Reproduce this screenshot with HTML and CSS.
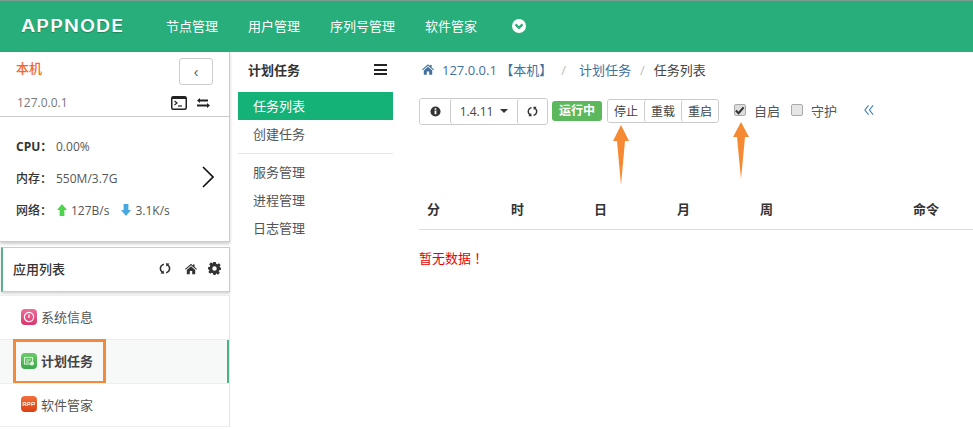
FILE: index.html
```html
<!DOCTYPE html>
<html lang="zh-CN">
<head>
    <meta charset="UTF-8">
    <title>AppNode</title>
    <link rel="stylesheet" href="styles.css">
</head>
<body>
    <svg class="sprites" width="0" height="0">
        <symbol id="i-home" viewBox="0 0 16 14"><path d="M8 0 L10.6 2.3 V1 H12.8 V4.2 L16 7 L15 8.1 L8 2.1 L1 8.1 L0 7 Z M8 3.4 L13.6 8.2 V14 H9.6 V9.8 H6.4 V14 H2.4 V8.2 Z"/></symbol>
        <symbol id="i-refresh" viewBox="0 0 14 14"><path d="M5.6 1.2 L5.9 3 C3.9 3.5 2.6 5 2.6 7 C2.6 8.3 3.2 9.4 4.1 10.2 L5.2 8.9 L6 13 L1.8 12.9 L2.9 11.5 C1.5 10.4 .7 8.8 .7 7 C.7 4.1 2.8 1.8 5.6 1.2 Z M8.4 12.8 L8.1 11 C10.1 10.5 11.4 9 11.4 7 C11.4 5.7 10.8 4.6 9.9 3.8 L8.8 5.1 L8 1 L12.2 1.1 L11.1 2.5 C12.5 3.6 13.3 5.2 13.3 7 C13.3 9.9 11.2 12.2 8.4 12.8 Z"/></symbol>
        <symbol id="i-gear" viewBox="0 0 14 14"><path fill-rule="evenodd" d="M5.6 0 H8.4 L8.8 1.9 L10 2.4 L11.7 1.3 L13.6 3.2 L12.5 4.9 L13 6 L14 6.2 V8.4 L12.1 8.8 L11.6 10 L12.7 11.7 L10.8 13.6 L9.1 12.5 L8.4 12.9 L8.1 14 H5.9 L5.2 12.1 L4 11.6 L2.3 12.7 L.4 10.8 L1.5 9.1 L1 8 L0 7.8 V5.6 L1.9 5.2 L2.4 4 L1.3 2.3 L3.2 .4 L4.9 1.5 L5.2 1.3 Z M7 4.6 A2.4 2.4 0 1 0 7 9.4 A2.4 2.4 0 1 0 7 4.6 Z"/></symbol>
    </svg>

    <header class="topbar">
        <div class="logo">APPNODE</div>
        <nav class="topnav">
            <a>节点管理</a>
            <a>用户管理</a>
            <a>序列号管理</a>
            <a>软件管家</a>
            <svg class="more" viewBox="0 0 16 16" width="14" height="14"><circle cx="8" cy="8" r="8" fill="#fff"/><path d="M4 6.2 L8 10.2 L12 6.2" fill="none" stroke="#27ae7a" stroke-width="2.6"/></svg>
        </nav>
    </header>

    <div class="layout">
        <aside class="sidebar">
            <section class="node-card">
                <div class="node-head">
                    <div class="node-name">本机</div>
                    <button class="collapse">‹</button>
                </div>
                <div class="node-ip">
                    <span>127.0.0.1</span>
                    <svg class="term" viewBox="0 0 16 14" width="16" height="14"><rect x=".75" y=".75" width="14.5" height="12.5" rx="1.5" fill="#fff" stroke="#222" stroke-width="1.5"/><rect x="1" y="1" width="14" height="2" fill="#222"/><path d="M3.5 5 L6 7 L3.5 9" fill="none" stroke="#222" stroke-width="1.2"/><path d="M7 10 H11" stroke="#222" stroke-width="1.2"/></svg>
                    <svg class="swap" viewBox="0 0 13 10" width="13" height="10"><path d="M3 0 V1.5 H11 V3.5 H3 V5 L0 2.5 Z M0 6.5 H10 V5 L13 7.5 L10 10 V8.5 H0 Z" fill="#222"/></svg>
                </div>
                <div class="node-stats">
                    <div class="stat"><b class="cpu">CPU：</b><span>0.00%</span></div>
                    <div class="stat"><b>内存：</b><span>550M/3.7G</span></div>
                    <div class="stat">
                        <b>网络：</b>
                        <svg class="net" viewBox="0 0 10 12" width="10" height="12"><path d="M5 0 L10 6 H7.4 V12 H2.6 V6 H0 Z" fill="#4fd34f"/></svg>
                        <span class="rate">127B/s</span>
                        <svg class="net" viewBox="0 0 10 12" width="10" height="12"><path d="M5 12 L10 6 H7.4 V0 H2.6 V6 H0 Z" fill="#4aa8e0"/></svg>
                        <span>3.1K/s</span>
                    </div>
                    <svg class="stat-next" viewBox="0 0 12 22" width="12" height="22"><path d="M1 1 L11 11 L1 21" fill="none" stroke="#111" stroke-width="1.6"/></svg>
                </div>
            </section>

            <section class="apps-head">
                <span class="apps-title">应用列表</span>
                <svg class="tool" width="12" height="13"><use href="#i-refresh"/></svg>
                <svg class="tool tool-home" width="12" height="12"><use href="#i-home"/></svg>
                <svg class="tool tool-gear" width="13" height="13"><use href="#i-gear"/></svg>
            </section>

            <ul class="apps">
                <li class="app">
                    <span class="app-icon pink"><svg viewBox="0 0 16 16" width="16" height="16"><circle cx="8" cy="8" r="4.6" fill="none" stroke="#fff" stroke-width="1.2"/><path d="M8 5.5 V9" stroke="#fff" stroke-width="1.3"/></svg></span>
                    <span>系统信息</span>
                </li>
                <li class="app active">
                    <span class="app-icon green"><svg viewBox="0 0 16 16" width="16" height="16"><rect x="3.5" y="4.5" width="8" height="6.5" fill="none" stroke="#d6f0d0" stroke-width="1.1"/><path d="M5 7 H10 M5 9 H8" stroke="#d6f0d0"/><circle cx="11" cy="10.5" r="2" fill="#e4f5df"/></svg></span>
                    <span>计划任务</span>
                    <span class="highlight"></span>
                </li>
                <li class="app">
                    <span class="app-icon orange"><svg viewBox="0 0 16 16" width="16" height="16"><path d="M2 10 V6.5 H4.8 V10 M2 8.6 H4.8 M6.4 10 V6.5 H9 V8.5 H6.4 M10.6 10 V6.5 H13.4 V8.5 H10.6" fill="none" stroke="#ffe2d0"/></svg></span>
                    <span>软件管家</span>
                </li>
            </ul>
        </aside>

        <nav class="submenu">
            <div class="sub-head">
                <span>计划任务</span>
                <span class="bars"><i></i><i></i><i></i></span>
            </div>
            <a class="sub-item current">任务列表</a>
            <a class="sub-item">创建任务</a>
            <div class="sub-rule"></div>
            <a class="sub-item">服务管理</a>
            <a class="sub-item">进程管理</a>
            <a class="sub-item">日志管理</a>
        </nav>

        <main class="content">
            <div class="crumbs">
                <svg class="crumb-home" width="12" height="11"><use href="#i-home"/></svg>
                <a>127.0.0.1 【本机】</a>
                <span class="sep wide">/</span>
                <a>计划任务</a>
                <span class="sep">/</span>
                <span>任务列表</span>
            </div>

            <div class="toolbar">
                <div class="btn-group tall">
                    <button class="btn"><svg viewBox="0 0 12 12" width="11" height="11"><circle cx="6" cy="6" r="5.5" fill="#333"/><rect x="5" y="5" width="2" height="4" fill="#fff"/><rect x="5" y="2.5" width="2" height="1.6" fill="#fff"/></svg></button>
                    <button class="btn version">1.4.11 <i class="caret"></i></button>
                    <button class="btn"><svg width="11" height="11" class="dark"><use href="#i-refresh"/></svg></button>
                </div>
                <span class="status">运行中</span>
                <div class="btn-group">
                    <button class="btn">停止</button>
                    <button class="btn">重载</button>
                    <button class="btn">重启</button>
                </div>
                <label class="check first"><span class="box on"><svg viewBox="0 0 12 12" width="11" height="11"><path d="M2 6 L5 9 L10.5 2.5" fill="none" stroke="#333" stroke-width="2.2"/></svg></span>自启</label>
                <label class="check"><span class="box"></span>守护</label>
                <svg class="fold" viewBox="0 0 11 11" width="10" height="10"><path d="M5 .5 L1 5.5 L5 10.5 M10 .5 L6 5.5 L10 10.5" fill="none" stroke="#3f7fb5" stroke-width="1.2"/></svg>
            </div>

            <table class="tasks">
                <thead>
                    <tr><th class="c-min">分</th><th class="c-col">时</th><th class="c-col">日</th><th class="c-col">月</th><th class="c-week">周</th><th>命令</th></tr>
                </thead>
            </table>
            <p class="empty" lang="zh-Hant">暂无数据！</p>

            <svg class="arrow arrow-stop" viewBox="0 0 16 60" width="16" height="60"><path d="M8 0 L16 16 H12 L8 60 L4 16 H0 Z" fill="#f58a33"/></svg>
            <svg class="arrow arrow-auto" viewBox="0 0 16 57" width="16" height="57"><path d="M8 0 L16 15 H12 L8 57 L4 15 H0 Z" fill="#f58a33"/></svg>
        </main>
    </div>
</body>
</html>
```

FILE: styles.css
```css
* {
    box-sizing: border-box;
}
body {
    margin: 0;
    height: 429px;
    overflow: hidden;
    background: #fff;
    color: #333;
    font-family: "Open Sans", "Noto Sans CJK SC", sans-serif;
    font-size: 13px;
}
.sprites {
    position: absolute;
}
.topbar {
    height: 52px;
    display: flex;
    align-items: center;
    padding-bottom: 2px;
    background: #27ae7a;
    border-top: 1px solid #7f9c90;
    color: #fff;
}
.logo {
    width: 166px;
    padding-left: 21px;
    font-family: Inter, sans-serif;
    font-size: 17px;
    font-weight: 600;
    letter-spacing: 1px;
    transform: scaleX(1.15);
    transform-origin: 21px 50%;
    text-shadow: 0 1px 1px rgba(0, 0, 0, .25);
}
.topnav {
    display: flex;
    align-items: center;
    gap: 30px;
    font-size: 13px;
}
.more {
    margin-left: 5px;
}
.layout {
    display: flex;
    height: 377px;
}
.sidebar {
    width: 230px;
    flex: none;
    background: #fff;
}
.node-card {
    border-right: 1px solid #ccc;
    border-bottom: 1px solid #ccc;
    box-shadow: 0 2px 3px rgba(0, 0, 0, .2);
}
.node-head {
    height: 37px;
    display: flex;
    justify-content: space-between;
    padding: 6px 16px 0;
}
.node-name {
    color: #f2691f;
    font-size: 13px;
    font-weight: 500;
}
.collapse {
    width: 34px;
    height: 27px;
    padding: 0;
    background: #fff;
    border: 1px solid #ccc;
    border-radius: 3px;
    color: #555;
    font-size: 14px;
}
.node-ip {
    height: 28px;
    display: flex;
    align-items: center;
    padding: 0 19px 0 17px;
    border-bottom: 1px solid #ccc;
    color: #777;
    font-size: 12px;
}
.node-ip span {
    flex: 1;
}
.swap {
    margin-left: 10px;
}
.node-stats {
    position: relative;
    padding: 13px 16px 15px;
}
.stat {
    height: 32px;
    display: flex;
    align-items: center;
    font-size: 12px;
    color: #555;
}
.stat b {
    width: 40px;
    color: #333;
    font-weight: 500;
}
.stat b.cpu {
    font-weight: 700;
}
.net {
    margin-right: 4px;
    margin-left: 1px;
}
.rate {
    margin-right: 11px;
}
.stat-next {
    position: absolute;
    right: 15px;
    top: 49px;
}
.apps-head {
    height: 45px;
    margin: 5px 0 0 1px;
    display: flex;
    align-items: center;
    padding: 0 8px 2px 10px;
    border: 1px solid #ccc;
    border-left: 2px solid #5cb08c;
    box-shadow: 0 2px 2px rgba(0, 0, 0, .15);
}
.apps-title {
    flex: 1;
    font-size: 13px;
    font-weight: 500;
}
.tool {
    fill: #333;
}
.tool-home {
    margin-left: 14px;
}
.tool-gear {
    margin-left: 11px;
}
.apps {
    list-style: none;
    margin: 3px 0 0;
    padding: 0;
    border-right: 1px solid #e4e4e4;
}
.app {
    position: relative;
    height: 44px;
    display: flex;
    align-items: center;
    padding: 0 0 2px 21px;
    border-top: 1px solid #eee;
    color: #555;
    font-size: 13px;
}
.app:last-child {
    border-bottom: 1px solid #eee;
}
.app-icon {
    width: 16px;
    height: 16px;
    margin-right: 4px;
    border-radius: 4px;
    display: flex;
}
.pink {
    background: linear-gradient(#ee6f9c, #d8376f);
}
.green {
    background: linear-gradient(#6ccb6a, #3ba84a);
}
.orange {
    background: linear-gradient(#f2703c, #dc3f12);
}
.active {
    background: #f7f8f8;
    font-weight: 600;
    color: #444;
    box-shadow: inset -2px 0 0 #4fb088;
}
.highlight {
    position: absolute;
    left: 13px;
    top: -1px;
    width: 93px;
    height: 45px;
    border: 3px solid #f08a3c;
}
.submenu {
    width: 180px;
    flex: none;
    padding: 0 17px 0 8px;
}
.sub-head {
    height: 40px;
    display: flex;
    justify-content: space-between;
    align-items: center;
    padding: 0 6px 5px 10px;
    font-size: 13px;
    font-weight: 600;
}
.bars {
    width: 13px;
    display: flex;
    flex-direction: column;
    gap: 2.5px;
}
.bars i {
    height: 2px;
    background: #222;
}
.sub-item {
    display: block;
    height: 28px;
    line-height: 28px;
    padding-left: 15px;
    color: #555;
    font-size: 13px;
}
.current {
    background: #14b277;
    color: #fff;
}
.sub-rule {
    height: 1px;
    margin: 5px 0 4px;
    background: #e5e5e5;
}
.content {
    position: relative;
    flex: 1;
    padding-left: 9px;
}
.crumbs {
    height: 37px;
    display: flex;
    align-items: center;
    padding-bottom: 2px;
    color: #444;
    font-size: 13px;
}
.crumbs a {
    color: #43709c;
}
.crumb-home {
    fill: #43709c;
    margin: 0 8px 0 3px;
}
.sep {
    margin: 0 9px;
    color: #bbb;
}
.sep.wide {
    margin: 0 13px 0 9px;
}
.toolbar {
    display: flex;
    align-items: center;
    height: 28px;
    margin-top: 8px;
}
.btn-group {
    display: flex;
    height: 24px;
    border: 1px solid #ccc;
    border-radius: 3px;
}
.btn-group.tall {
    height: 27px;
}
.btn {
    width: 37px;
    padding: 0;
    background: #fff;
    border: 0;
    border-left: 1px solid #ccc;
    border-radius: 3px;
    color: #444;
    font-family: inherit;
    font-size: 12px;
}
.btn:first-child {
    width: 36px;
    border-left: 0;
}
.tall .btn {
    width: 30px;
    display: flex;
    align-items: center;
    justify-content: center;
}
.tall .btn.version {
    width: 67px;
    gap: 7px;
}
.dark {
    fill: #333;
}
.caret {
    border: 4px solid transparent;
    border-top-color: #333;
    border-bottom: 0;
}
.status {
    margin: 0 5px 0 4px;
    padding: 0 7px;
    height: 20px;
    line-height: 19px;
    background: #5cb85c;
    border-radius: 3px;
    color: #fff;
    font-size: 12px;
    font-weight: 700;
}
.check {
    display: flex;
    align-items: center;
    gap: 8px;
    margin-left: 11px;
    padding-bottom: 2px;
    color: #555;
    font-size: 13px;
}
.check.first {
    margin-left: 15px;
}
.box {
    width: 12px;
    height: 12px;
    display: flex;
    background: #e6e6e6;
    border: 1px solid #aaa;
    border-radius: 2px;
}
.box.on {
    background: #ddd;
}
.box svg {
    margin: 0 -1px;
}
.fold {
    margin: 0 0 2px 27px;
}
.tasks {
    width: 100%;
    margin-top: 67px;
    border-collapse: collapse;
    table-layout: fixed;
}
.tasks th {
    height: 37px;
    padding: 0 0 3px 8px;
    border-bottom: 1px solid #ddd;
    text-align: left;
    font-size: 13px;
    font-weight: 600;
}
.c-min {
    width: 84px;
}
.c-col {
    width: 83px;
}
.c-week {
    width: 153px;
}
.empty {
    margin: 18px 0 0;
    color: #e00;
    font-family: "Noto Sans CJK TC", sans-serif;
    font-size: 13px;
}
.arrow {
    position: absolute;
}
.arrow-stop {
    left: 203px;
    top: 73px;
}
.arrow-auto {
    left: 323px;
    top: 70px;
}
```
